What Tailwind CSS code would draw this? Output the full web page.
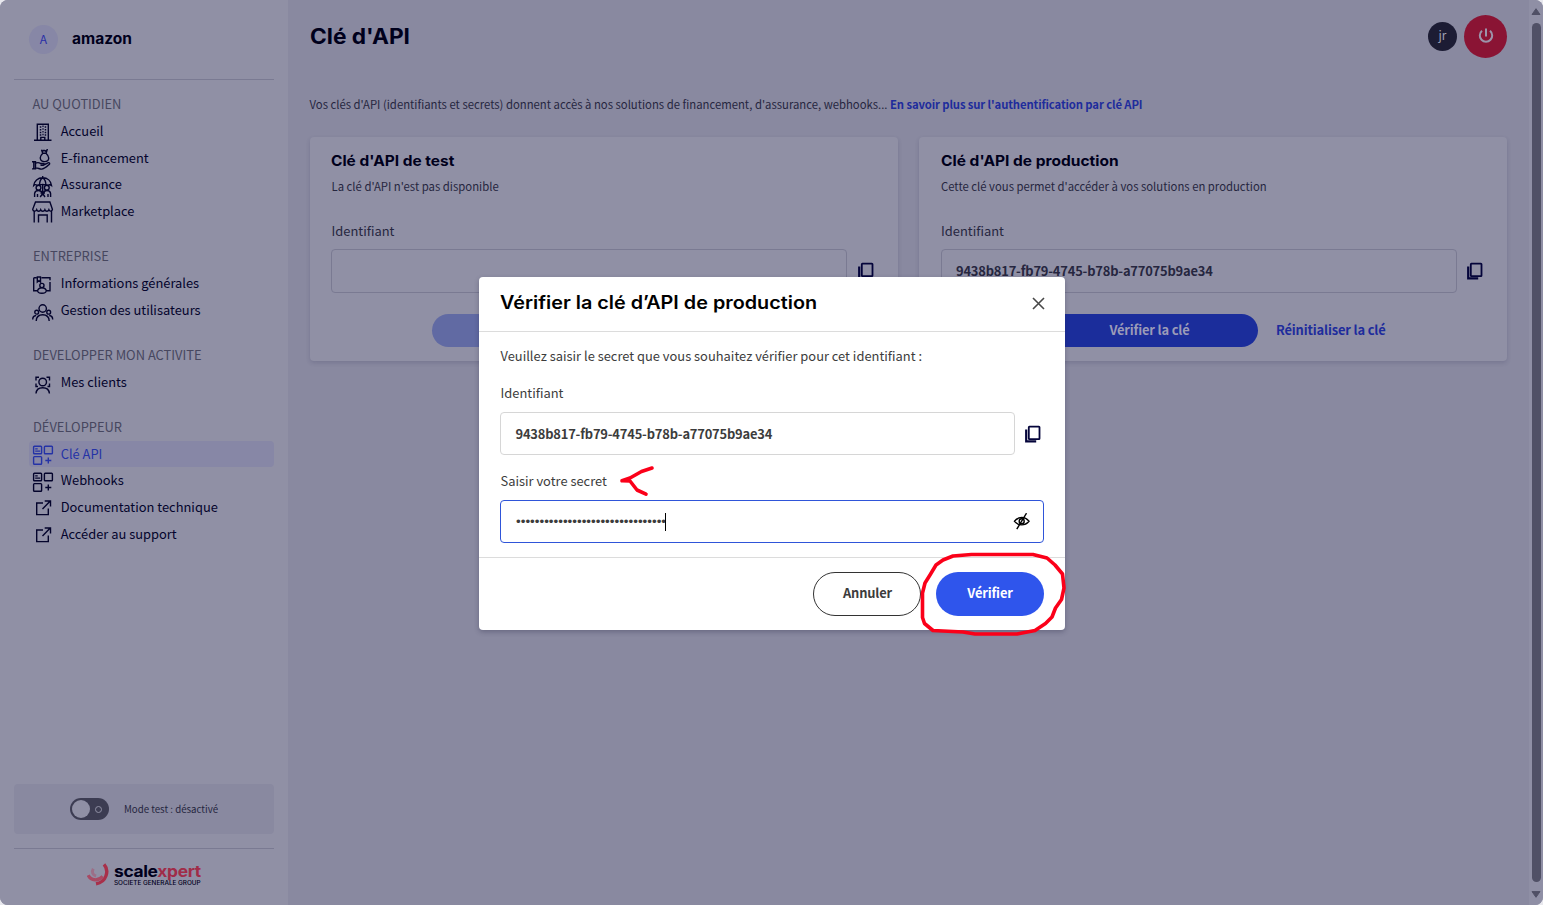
<!DOCTYPE html>
<html lang="fr">
<head>
<meta charset="utf-8">
<title>Clé d'API</title>
<script src="https://cdn.jsdelivr.net/npm/@tailwindcss/browser@4"></script>
</head>
<body class="h-[905px] w-[1543px] overflow-hidden bg-[#e8e8ee] font-['Noto_Sans_CJK_SC',sans-serif] text-[12.9px] text-[#26263f]">
<svg class="hidden">
  <defs>
    <symbol id="grid" viewBox="0 0 22 22"><g fill="none" stroke="currentColor" stroke-width="1.4"><rect x="1.6" y="2.2" width="8" height="7.6" rx=".8"/><rect x="12.4" y="2.2" width="8" height="7.6" rx=".8"/><rect x="1.6" y="12.6" width="8" height="7.6" rx=".8"/><path d="M3.200 4.900h2.500M3.200 7.100h5M13.300 16.500h6M16.300 13.500v6"/></g></symbol>
    <symbol id="ext" viewBox="0 0 22 22"><path d="M11 6H4.700v11.600h11.600v-6M10.500 12.100l7.500-7.800M12.700 4h5.800v5.600" fill="none" stroke="currentColor" stroke-width="1.4"/></symbol>
    <symbol id="copy" viewBox="0 0 18 18"><rect x="4.800" y="1.700" width="10.700" height="12.400" rx=".6" fill="none" stroke="currentColor" stroke-width="1.800"/><path d="M2.200 4.500v11.800h10" fill="none" stroke="currentColor" stroke-width="2.200"/></symbol>
  </defs>
</svg>
<div class="flex h-full overflow-hidden rounded-lg bg-[#8989a0]">

  <aside class="flex w-[288px] shrink-0 flex-col bg-[#9090a5] px-[14px]">
    <div class="flex h-[80px] items-center border-b border-[#7a7a92] pl-[15px]">
      <div class="flex size-[29px] items-center justify-center rounded-full bg-[#8787a6] pb-[2px] text-[12px] text-[#2a2fa6]">A</div>
      <div class="ml-[14px] font-[Inter] text-[15px] font-bold text-[#00001c]"><span class="inline-block origin-left scale-x-[1.035]">amazon</span></div>
    </div>
    <nav class="flex flex-col gap-[18.400px] pt-[10.500px] pl-[15px] text-[#04042c]">
      <div>
        <div class="flex h-[26.75px] items-center pl-[3.500px] text-[#47475f]">AU QUOTIDIEN</div>
        <div class="flex h-[26.75px] items-center pl-[3px]">
          <svg class="mt-[3px] mr-[6.700px] size-[22px]" viewBox="0 0 22 22" fill="none" stroke="currentColor" stroke-width="1.400"><path d="M2 19.200h17.500M5.300 19V3.200h11V19M8.800 19v-2.600h4V19"/><path d="M7.800 6h1.500M10.400 5.300h1.200M12.700 6h1.500M7.800 8.700h1.500M10.400 8h1.200M12.700 8.700h1.500M7.800 11.400h1.500M10.400 10.700h1.200M12.700 11.400h1.500M7.800 14h1.500M10.400 13.400h1.200M12.700 14h1.500" stroke-width="1.500"/></svg><span>Accueil</span></div>
        <div class="flex h-[26.75px] items-center pl-[3px]">
          <svg class="mt-[5px] mr-[6.700px] size-[22px]" viewBox="0 0 22 22" fill="none" stroke="currentColor" stroke-width="1.400"><path d="M9.500.8l1 1.400 1.500-.9 1.500.9 1.600-1.400-1 3.400h-3.400zM10.800 4.200c-2 1.900-2.700 3.300-2.500 5 .2 2.200 1.500 3.400 4.200 3.400s4.100-1.200 4.200-3.400c.1-1.700-.7-3.100-2.700-5z"/><path d="M0 12.700h3.500v7.200H0M1.800 12.700v7M3.500 14.200c2.200-1 3.600-.8 5 .3h3c1 .3.900 1.700-.2 1.800H8.500M11.500 16l4.500-2.200c1.500-.5 2.200.7 1.200 1.600-2.500 2.400-4.800 4.800-7.800 4.700-2 0-3.700-1.500-5.900-1.200"/></svg><span>E-financement</span></div>
        <div class="flex h-[26.75px] items-center pl-[3px]">
          <svg class="mt-[5px] mr-[6.700px] size-[22px]" viewBox="0 0 22 22" fill="none" stroke="currentColor" stroke-width="1.400"><path d="M1.700 9.500C2.200 5 5.800 1.800 10.700 1.800S19 5 19.500 9.500c-1.100-1-2.600-1-3.400 0-1.200-1-2-1-2.700-.5-1.700-.8-3.700-.8-5.400 0-1-.5-1.800-.4-2.800.5-1-1-2.500-1-3.500 0zM10.700 0v2M7.500 9c0-3.500 1.300-6 3.200-7.200C12.600 3 13.900 5.500 13.900 9M10.700 9v7"/><circle cx="6.500" cy="11.800" r="2.400"/><circle cx="14.800" cy="11.800" r="2.400"/><path d="M2.600 21v-3.500c.3-2 1.500-3 3.900-3 2 0 3.400 1 4.200 3 .8-2 2.200-3 4.200-3 2.200 0 3.400 1 3.700 3V21M5.500 21v-3M16 21v-3M8.200 21l2.500-3.500L13 21M8.500 17h4.500"/></svg><span>Assurance</span></div>
        <div class="flex h-[26.75px] items-center pl-[3px]">
          <svg class="mt-[3px] mr-[6.700px] size-[22px]" viewBox="0 0 22 22" fill="none" stroke="currentColor" stroke-width="1.400"><path d="M3.500 1h14.400l2.500 7.300c-.3 2.200-2.800 2.400-3.500.5-.7 1.900-3.300 1.900-4 0-.7 1.900-3.500 1.900-4.200 0-.7 1.900-3.300 1.900-4 0-.7 1.900-3.700 1.700-4-.5zM2.200 10.500V21.500M19.500 10.500V21.500M6.500 21.500V14h8.700v7.500"/></svg><span>Marketplace</span></div>
      </div>
      <div>
        <div class="flex h-[26.75px] items-center pl-[4px] text-[#47475f]">ENTREPRISE</div>
        <div class="flex h-[26.75px] items-center pl-[3px]">
          <svg class="mt-[5px] mr-[6.700px] size-[22px]" viewBox="0 0 22 22" fill="none" stroke="currentColor" stroke-width="1.400"><path d="M4.500 3.800H2.500c-.6 0-.8.300-.8.800v12.200h4M9.500 3.800h8.500v2.500M18 8v8.800h-3M5.300 3h3.200v5L6.900 6.700 5.300 8zM5.500 16.500c1-2 2.400-2.800 4.400-2.800s3.500.8 4.500 2.800c-.2 2-2.500 2.800-4.500 2.800s-4.200-.8-4.400-2.800z"/><circle cx="9.900" cy="11.500" r="2.100"/></svg><span>Informations générales</span></div>
        <div class="flex h-[26.75px] items-center pl-[3px]">
          <svg class="mt-[5px] mr-[6.700px] size-[22px]" viewBox="0 0 22 22" fill="none" stroke="currentColor" stroke-width="1.400"><circle cx="10.700" cy="7.500" r="3.700"/><circle cx="4.700" cy="11.200" r="1.900"/><circle cx="16.700" cy="11.200" r="1.900"/><path d="M4.200 20c.2-4.200 2.800-6.200 6.500-6.200s6.300 2 6.500 6.200M.7 18.500c0-2.300 1-3.800 3.500-4M20.700 18.500c0-2.300-1-3.800-3.500-4"/></svg><span>Gestion des utilisateurs</span></div>
      </div>
      <div>
        <div class="flex h-[26.75px] items-center pl-[4px] text-[#47475f]">DEVELOPPER MON ACTIVITE</div>
        <div class="flex h-[26.75px] items-center pl-[3px]">
          <svg class="mt-[5px] mr-[6.700px] size-[22px]" viewBox="0 0 22 22" fill="none" stroke="currentColor" stroke-width="1.400"><circle cx="10.700" cy="9" r="3.800"/><path d="M4 20.500c.3-4.200 2.800-5.800 6.700-5.800s6.400 1.600 6.700 5.800M4 7.500V4.200h3M14.500 4.200h3v3.300M4 10.500v3h2M17.500 10.500v3h-2"/></svg><span>Mes clients</span></div>
      </div>
      <div>
        <div class="flex h-[26.75px] items-center pl-[4px] text-[#47475f]">DÉVELOPPEUR</div>
        <div class="mt-[1.500px] flex h-[26px] items-center rounded-[4px] bg-[#8787a6] pb-[2px] pl-[3px] text-[#2533a6]"><svg class="mt-[4px] mr-[6.700px] size-[22px]"><use href="#grid"/></svg><span>Clé API</span></div>
        <div class="-mt-[0.750px] flex h-[26.75px] items-center pl-[3px]"><svg class="mt-[3px] mr-[6.700px] size-[22px]"><use href="#grid"/></svg><span>Webhooks</span></div>
        <div class="flex h-[26.75px] items-center pl-[3px]"><svg class="mt-[3px] mr-[6.700px] size-[22px]"><use href="#ext"/></svg><span>Documentation technique</span></div>
        <div class="flex h-[26.75px] items-center pl-[3px]"><svg class="mt-[2px] mr-[6.700px] size-[22px]"><use href="#ext"/></svg><span>Accéder au support</span></div>
      </div>
    </nav>
    <div class="mt-auto flex h-[50px] items-center justify-center rounded-[4px] bg-[#8989a0] text-[9.700px]">
      <div class="mr-[15px] flex h-[22px] w-[39px] items-center justify-between rounded-full bg-[#3c3c52] pr-[7px] pl-[2px]"><i class="size-[18px] rounded-full bg-[#9090a5]"></i><i class="size-[7px] rounded-full border border-[#9090a5]"></i></div>
      <span>Mode test : désactivé</span>
    </div>
    <div class="mt-[14px] flex h-[57px] justify-center border-t border-[#7a7a92] pt-[13px]">
      <svg class="mr-[5px] h-[24px] w-[22px]" viewBox="0 0 22 24" fill="none"><path d="M17 2.300C22.500 8.500 19.500 20 9 21.800" stroke="#a8304a" stroke-width="3.400"/><path d="M1.200 13.200C4 18.800 11 19.300 15.800 14.500" stroke="#a84a64" stroke-width="3.300"/><path d="M6.300 6.700c-2 3.200-.5 6.500 2.800 7.300" stroke="#9c6f88" stroke-width="3"/></svg>
      <div class="w-[87px] font-[Inter] whitespace-nowrap text-[#00001c]">
        <div class="text-[16px] leading-[18px] font-bold tracking-[-0.3px]"><span class="inline-block origin-left scale-x-[1.085]">scale<span class="text-[#a02c48]">xpert</span></span></div>
        <div class="text-[5.800px] leading-[6px] font-medium"><span class="inline-block origin-left scale-x-[1.100]">SOCIETE GENERALE GROUP</span></div>
      </div>
    </div>
  </aside>

  <main class="flex-1 pl-[21.500px]">
    <header class="flex h-[72px] items-center justify-between pr-[22px]">
      <h1 class="pt-[2px] font-[Inter] text-[21px] font-bold text-[#00001c]"><span class="inline-block origin-left scale-x-[1.08]">Clé d'API</span></h1>
      <div class="flex items-center gap-[7px]">
        <div class="flex size-[29px] items-center justify-center rounded-full bg-[#1c1c34] pb-[2px] text-[12px] text-[#a0a0b5]">jr</div>
        <div class="flex size-[43px] items-center justify-center rounded-full bg-[#8a1434]"><svg class="size-[18px]" viewBox="0 0 18 18" fill="none" stroke="#9c94aa" stroke-width="2"><path d="M5 3.800a6.200 6.200 0 1 0 8 0M9 1.500v8"/></svg></div>
      </div>
    </header>
    <p class="mt-[20px] h-[24px] text-[11.320px] leading-[24px] whitespace-nowrap">Vos clés d'API (identifiants et secrets) donnent accès à nos solutions de financement, d'assurance, webhooks... <b class="tracking-[-0.13px] text-[#1e2c9c]">En savoir plus sur l'authentification par clé API</b></p>
    <div class="mt-[21px] flex gap-[21.500px]">
      <section class="h-[224px] w-[588px] rounded-[4px] bg-[#9090a5] px-[21.500px] pt-[13px] shadow-[0_2px_4px_rgba(40,40,80,0.18)]">
        <h2 class="h-[22px] font-[Inter] text-[14.500px] leading-[22px] font-bold text-[#00001c]"><span class="inline-block origin-left scale-x-[1.065]">Clé d'API de test</span></h2>
        <p class="mt-[3px] h-[22px] pl-[0.500px] text-[11.350px] leading-[22px]">La clé d'API n'est pas disponible</p>
        <p class="mt-[23px] h-[22px] pl-[0.500px] leading-[22px]">Identifiant</p>
        <div class="mt-[7px] flex items-center"><div class="h-[44px] w-[516px] rounded-[4px] border border-[#7a7a92]"></div><svg class="ml-[10px] size-[18px] text-[#04043a]"><use href="#copy"/></svg></div>
        <div class="mt-[21px] flex items-center justify-center gap-[18px] font-bold"><div class="h-[33px] w-[217px] rounded-full bg-[#616aa3]"></div><span class="w-[109px]"></span></div>
      </section>
      <section class="h-[224px] w-[588px] rounded-[4px] bg-[#9090a5] px-[21.500px] pt-[13px] shadow-[0_2px_4px_rgba(40,40,80,0.18)]">
        <h2 class="h-[22px] font-[Inter] text-[14.500px] leading-[22px] font-bold text-[#00001c]"><span class="inline-block origin-left scale-x-[1.07]">Clé d'API de production</span></h2>
        <p class="mt-[3px] h-[22px] pl-[0.500px] text-[11.320px] leading-[22px]">Cette clé vous permet d'accéder à vos solutions en production</p>
        <p class="mt-[23px] h-[22px] pl-[0.500px] leading-[22px]">Identifiant</p>
        <div class="mt-[7px] flex items-center"><div class="flex h-[44px] w-[516px] items-center rounded-[4px] border border-[#7a7a92] pl-[14.500px] font-bold tracking-[-0.180px]">9438b817-fb79-4745-b78b-a77075b9ae34</div><svg class="ml-[9px] size-[18px] text-[#04043a]"><use href="#copy"/></svg></div>
        <div class="mt-[21px] flex items-center justify-center gap-[18px] font-bold tracking-[-0.150px]"><div class="flex h-[33px] w-[217px] items-center justify-center rounded-full bg-[#1b2d9b] pb-[1px] text-[#9b9bb8]">Vérifier la clé</div><span class="w-[109px] pb-[1px] whitespace-nowrap text-[#1e2c9c]">Réinitialiser la clé</span></div>
      </section>
    </div>
  </main>

  <div class="flex w-[14px] shrink-0 flex-col items-center bg-[#8f8fa5] pt-[8px] pb-[7px]">
    <svg class="h-[7px] w-[10px]" viewBox="0 0 10 7"><path d="M1 6.500h8L5 .7z" fill="#505066" stroke="#505066" stroke-linejoin="round"/></svg>
    <div class="mt-[8px] w-[9px] flex-1 rounded-full bg-[#505066]"></div>
    <svg class="mt-[9px] h-[7px] w-[10px]" viewBox="0 0 10 7"><path d="M1 .6h8L5 6.300z" fill="#505066" stroke="#505066" stroke-linejoin="round"/></svg>
  </div>
</div>

<div class="absolute top-[277px] left-[479px] flex h-[353px] w-[586px] flex-col rounded-[4px] bg-white text-[#3c3c3c] shadow-[0_2px_5px_rgba(30,30,60,0.3)]">
  <div class="flex h-[55px] items-center justify-between border-b border-[#dcdcdc] pr-[20px] pb-[3px] pl-[21px]">
    <h2 class="font-[Inter] text-[18px] font-semibold text-black"><span class="inline-block origin-left scale-x-[1.100]">Vérifier la clé d’API de production</span></h2>
    <svg class="mt-[2px] size-[13px]" viewBox="0 0 13 13"><path d="M1 1l11 11M12 1L1 12" stroke="#484848" stroke-width="1.600"/></svg>
  </div>
  <div class="flex-1 px-[21px] pt-[13px]">
    <p class="h-[22px] pl-[0.500px] leading-[22px]">Veuillez saisir le secret que vous souhaitez vérifier pour cet identifiant :</p>
    <p class="mt-[15px] h-[22px] pl-[0.500px] leading-[22px]">Identifiant</p>
    <div class="mt-[8px] flex items-center"><div class="flex h-[43px] w-[515px] items-center rounded-[4px] border border-[#d6d6d6] pl-[14.500px] font-bold tracking-[-0.180px]">9438b817-fb79-4745-b78b-a77075b9ae34</div><svg class="ml-[9px] size-[18px] text-[#04043a]"><use href="#copy"/></svg></div>
    <p class="mt-[15px] h-[22px] pl-[0.500px] leading-[22px]">Saisir votre secret</p>
    <div class="mt-[8px] flex h-[43px] w-[544px] items-center rounded-[4px] border border-[#2f55d9] pr-[13px] pl-[15px]">
      <span class="pt-[2px] font-['Liberation_Sans'] text-[13.400px]">••••••••••••••••••••••••••••••••</span><i class="-ml-px h-[18px] w-px bg-black"></i>
      <svg class="ml-auto h-[18px] w-[17px]" viewBox="0 0 17 18" fill="none" stroke="#000" stroke-width="1.400"><path d="M1.500 8.300c4-5 10.500-5 14.500 0-4 4.800-10.500 4.800-14.500 0z"/><circle cx="8.700" cy="8.200" r="2.500"/><path d="M13.500.2L3.800 16.200"/></svg>
    </div>
  </div>
  <div class="flex h-[73px] items-center justify-end gap-[15px] border-t border-[#dcdcdc] pr-[21px] font-bold tracking-[-0.150px]">
    <div class="flex h-[44px] w-[108px] items-center justify-center rounded-full border border-[#333] pb-[2px] pl-[1px]">Annuler</div>
    <div class="flex h-[44px] w-[108px] items-center justify-center rounded-full bg-[#2f55ec] pb-[2px] text-white">Vérifier</div>
  </div>
</div>

<svg class="pointer-events-none absolute top-0 left-0 h-[905px] w-[1543px]" fill="none" stroke="#fb0019" stroke-width="3.600" stroke-linecap="round" stroke-linejoin="round">
  <path d="M652 468l-10.500 3.500L630 478l-8 2.800 8 .2 7 9 9 4.200"/>
  <path d="M922.500 593L925 583l5-8 6-10 7-5 10-4 18.500-1.500H1033l14 3.500 8 7 7.500 9 1.500 14-2.500 11.500-6 8.500-3.500 9-6.500 6.500-10.500 7-18 3.500H975l-12-2-30-1.500-8.500-7-2-6z"/>
</svg>
</body>
</html>
